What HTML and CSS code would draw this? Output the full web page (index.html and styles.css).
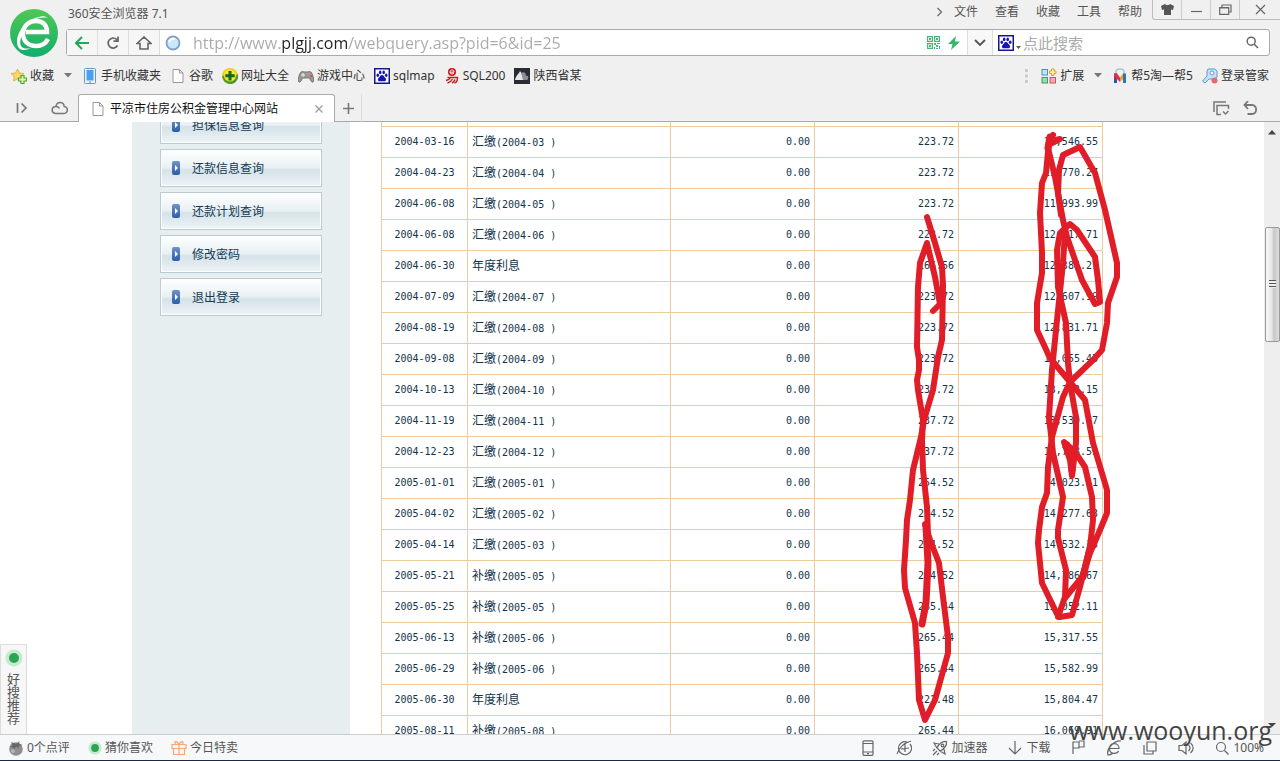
FILE: index.html
```html
<!DOCTYPE html>
<html lang="zh-CN">
<head>
<meta charset="utf-8">
<title>平凉市住房公积金管理中心网站</title>
<link rel="stylesheet" href="styles.css">
</head>
<body>
<svg class="defs" width="0" height="0" aria-hidden="true">
  <symbol id="paw" viewBox="0 0 16 16"><rect x=".75" y=".75" width="14.500" height="14.500" fill="#fff" stroke="#16168c" stroke-width="1.500"/><g fill="#1414b4"><ellipse cx="3.800" cy="7.200" rx="1.300" ry="1.700"/><ellipse cx="6.200" cy="4.400" rx="1.300" ry="1.800"/><ellipse cx="9.700" cy="4.400" rx="1.300" ry="1.800"/><ellipse cx="12.200" cy="7.200" rx="1.300" ry="1.700"/><path d="M8 7c1.700 0 2 1.700 3.200 2.800 1.600 1.500.8 3.700-1.200 3.500-1.400-.2-2.600-.2-4 0-2 .2-2.800-2-1.200-3.500C6 8.700 6.300 7 8 7z"/></g></symbol>
  <symbol id="page" viewBox="0 0 16 16"><path d="M3 1.500h6.500L13 5v9.500H3zM9.500 1.500V5H13" fill="#fff" stroke="#999"/></symbol>
  <symbol id="caret" viewBox="0 0 8 5"><path d="M0 0h8L4 4.500z" fill="#777"/></symbol>
  <symbol id="dot" viewBox="0 0 18 18"><circle cx="9" cy="9" r="8.500" fill="#c4ead0"/><circle cx="9" cy="9" r="5" fill="#2ca552"/></symbol>
</svg>
<header class="chrome">
  <div class="top">
    <svg class="logo" viewBox="0 0 48 48" aria-label="360"><defs><linearGradient id="lg" x1="0" y1="0" x2="0" y2="1"><stop offset="0" stop-color="#50c853"/><stop offset="1" stop-color="#12ad70"/></linearGradient></defs><circle cx="24" cy="24" r="24" fill="url(#lg)"/><path d="M16 23h21c0-7-4-11-11-11-8 0-13 6-13 12 0 8 5 13 13 13 6 0 10-3 12-7" fill="none" stroke="#fff" stroke-width="4.500"/><path d="M38 9c-3-2-6-2-9-1C17 10 7 22 7 33c0 4 2 8 6 8 3 0 6-1 8-2-4 1-8 1-10-2-2-4 0-11 4-17C20 12 29 7 38 9z" fill="#fff"/></svg>
    <div class="topmain">
      <div class="titlebar">
        <span class="title">360安全浏览器 7.1</span>
        <nav class="menu">
          <svg width="8" height="10" viewBox="0 0 8 10"><path d="M1.500 1l4 4-4 4" class="ln"/></svg>
          <button>文件</button><button>查看</button><button>收藏</button><button>工具</button><button>帮助</button>
        </nav>
        <div class="winbtns">
          <button aria-label="皮肤"><svg width="13" height="11" viewBox="0 0 13 11"><path d="M4 0c1 1.500 4 1.500 5 0l4 2-1 4-2-.5V11H3V5.500L1 6 0 2z" fill="#555"/></svg></button>
          <button aria-label="最小化"><svg width="13" height="11" viewBox="0 0 13 11"><path d="M1 7.500h11" class="ln"/></svg></button>
          <button aria-label="还原"><svg width="13" height="11" viewBox="0 0 13 11"><path d="M.7 3.500h9v6.800h-9zM.7 4h9M3 3V1h9v7H10" class="ln"/></svg></button>
          <button aria-label="关闭"><svg width="11" height="11" viewBox="0 0 11 11"><path d="M1 1l9 9M10 1l-9 9" class="ln"/></svg></button>
        </div>
      </div>
      <div class="address">
        <button class="nav" aria-label="后退"><svg width="16" height="14" viewBox="0 0 16 14"><path d="M8 1L2 7l6 6M2 7h13" fill="none" stroke="#21a957" stroke-width="2"/></svg></button>
        <button class="nav" aria-label="刷新"><svg width="14" height="14" viewBox="0 0 14 14"><path d="M11.500 9.500a5 5 0 1 1-1-6.200L12 4.800M12 .5v4.700H7.500" fill="none" stroke="#666" stroke-width="1.700"/></svg></button>
        <button class="nav" aria-label="主页"><svg width="16" height="14" viewBox="0 0 16 14"><path d="M1 7.500L8 1l7 6.500h-3V13H4V7.500z" fill="none" stroke="#666" stroke-width="1.600"/></svg></button>
        <svg class="site" width="16" height="16" viewBox="0 0 16 16"><circle cx="8" cy="8" r="6.500" fill="#c9e8fb" stroke="#7f9fc4" stroke-width="1.800"/><path d="M4 7c1-3 4-4 6-3" stroke="#fff" stroke-width="2" fill="none"/></svg>
        <input class="url" type="text" aria-label="地址" value="http://www.plgjj.com/webquery.asp?pid=6&amp;id=25">
        <svg width="13" height="13" viewBox="0 0 13 13"><path d="M.6.600h4.800v4.800H.6zM7.600.600h4.800v4.800H7.600zM.6 7.600h4.800v4.800H.6z" fill="none" stroke="#45b878" stroke-width="1.200"/><path d="M2 2h2v2H2zM9 2h2v2H9zM2 9h2v2H2zM7 7h2v2H7zM10 7h3v1h-3zM9 9h2v2H9zM12 10h1v3h-1zM7 11h1v2H7zM9 12h2v1H9z" fill="#45b878"/></svg>
        <svg class="bolt" width="12" height="14" viewBox="0 0 12 14"><path d="M8 0L0 8h4.500L3 14l9-8.500H7z" fill="#35b768"/></svg>
        <button class="drop" aria-label="展开"><svg width="12" height="8" viewBox="0 0 12 8"><path d="M1 1l5 5 5-5" fill="none" stroke="#555" stroke-width="1.900"/></svg></button>
        <svg class="engine" width="16" height="16"><use href="#paw"/></svg>
        <svg class="mini" width="5" height="3" viewBox="0 0 8 5"><path d="M0 0h8L4 5z" fill="#555"/></svg>
        <input class="search" type="text" aria-label="搜索" placeholder="点此搜索">
        <button class="go" aria-label="搜索"><svg width="13" height="13" viewBox="0 0 13 13"><circle cx="5.200" cy="5.200" r="4" fill="none" stroke="#666" stroke-width="1.500"/><path d="M8 8l4 4" stroke="#666" stroke-width="1.600"/></svg></button>
      </div>
    </div>
  </div>
  <nav class="marks">
    <a href="#"><svg width="16" height="16" viewBox="0 0 16 16"><path d="M6.500 1l2 4 4.500.5-3.300 3 .9 4.500-4.100-2.200L2.500 13l.8-4.500L0 5.500 4.500 5z" fill="#ffd667" stroke="#d8a63a" stroke-width=".8"/><path d="M10 7.500h3V10h2.500v3H13v2.500h-3V13H7.500v-3H10z" fill="#dff7bd" stroke="#4ea52c" stroke-width="1.200"/></svg>收藏</a>
    <svg class="caret" width="8" height="5"><use href="#caret"/></svg>
    <a href="#"><svg width="16" height="16" viewBox="0 0 16 16"><rect x="2.500" y=".5" width="11" height="15" rx="1" fill="#eaf2fa" stroke="#7893ad"/><rect x="4.500" y="2" width="7" height="10.500" fill="#4aa0ee"/><path d="M7 14h2" stroke="#789"/></svg>手机收藏夹</a>
    <a href="#"><svg width="16" height="16"><use href="#page"/></svg>谷歌</a>
    <a href="#"><svg width="16" height="16" viewBox="0 0 16 16"><circle cx="8" cy="8" r="8" fill="#f0cf1c"/><path d="M0 9C4 4 10 11 16 6A8 8 0 0 1 2 13z" fill="#4d9a2c"/><circle cx="8" cy="7.500" r="6" fill="#f6e63a"/><path d="M6.500 3h3v3.200h3.200v3H9.500v3.200h-3V9.200H3.300v-3h3.200z" fill="#13691f"/></svg>网址大全</a>
    <a href="#"><svg width="16" height="16" viewBox="0 0 16 16"><path d="M3 4c2-1 3 0 5 0s3-1 5 0c2 2 3 7 2.500 9.500-1 2-3-.5-4-3.500h-7c-1 3-3 5.500-4 3.500C0 11 1 6 3 4z" fill="#9a9997" stroke="#565" stroke-width=".7"/><path d="M3 7h4M5 5v4" stroke="#eee"/><circle cx="11" cy="6" r="1.200" fill="#e87d7d"/><circle cx="13" cy="8" r="1" fill="#d44"/></svg>游戏中心</a>
    <a href="#"><svg width="16" height="16"><use href="#paw"/></svg>sqlmap</a>
    <a href="#"><svg width="16" height="16" viewBox="0 0 16 16"><circle cx="8" cy="4" r="4" fill="#c91820"/><path d="M6 4.200h4C10 1 6 1.500 6 4.200c0 2 3 2.300 4 1" fill="none" stroke="#fff"/><path d="M3.500 9.500h10c0 3-.8 5-3 5.500M7 9c-1 2-3 3-5 3.500M8.500 11c-1 2-3 3.500-5 4M11 11.500c-.6 2-2 3-3 3.500" fill="none" stroke="#c91820" stroke-width="1.400"/></svg>SQL200</a>
    <a href="#"><svg width="16" height="16" viewBox="0 0 16 16"><path d="M0 0h16v16H0z" fill="#292b35"/><path d="M1 12C2 7 5 6 6 3l3 4 1 5z" fill="#e6e6e8"/><path d="M7 5c3-2 5 0 5 3 3-1 3 3 1 4H9" fill="#8b8e96"/></svg>陕西省某</a>
    <svg class="grip" width="3" height="14" viewBox="0 0 3 14"><path d="M0 0h3v3H0zM0 5.500h3v3H0zM0 11h3v3H0z" fill="#ccc"/></svg>
    <a href="#"><svg width="16" height="16" viewBox="0 0 16 16"><rect x="1" y="1.500" width="5.500" height="5.500" fill="#bfe5fb" stroke="#4c90bb"/><rect x="1" y="9.500" width="5.500" height="5.500" fill="#96deb1" stroke="#3b9f63"/><rect x="9" y="9.500" width="5.500" height="5.500" fill="#f6a9ab" stroke="#c95b60"/><path d="M10.500 1h2.500v2h2v2.500h-2v2h-2.500v-2h-2V3h2z" fill="#fff0b0" stroke="#dda02a"/></svg>扩展</a>
    <svg class="caret" width="8" height="5"><use href="#caret"/></svg>
    <a href="#"><svg width="16" height="16" viewBox="0 0 16 16"><path d="M4 6V4c0-4 8-4 8 0v2" fill="none" stroke="#a9c7cf" stroke-width="1.600"/><path d="M2 5.500h3V15H2z" fill="#7a3c91"/><path d="M2 5.500h3l3 4v4.500L2 8z" fill="#df3045"/><path d="M11 5.500L8 9.500V14l4-4z" fill="#f0a022"/><path d="M11 5.500h3V15h-3z" fill="#2778bb"/><path d="M2 12h3v3H2z" fill="#2b58a5"/></svg>帮5淘—帮5</a>
    <a href="#"><svg width="16" height="16" viewBox="0 0 16 16"><path d="M6 1h7l2 2v6l-3 2H7l-4 4-2.500-2L5 8V3z" fill="#c5e2f8" stroke="#639cd0"/><circle cx="10" cy="5" r="2" fill="#fff" stroke="#639cd0"/><circle cx="12.500" cy="12.500" r="3" fill="#e7686f"/></svg>登录管家</a>
  </nav>
  <div class="tabs">
    <button aria-label="侧栏"><svg width="12" height="12" viewBox="0 0 12 12"><path d="M1.500 1v10M5.500 1.500L10 6l-4.500 4.500" fill="none" stroke="#777" stroke-width="1.700"/></svg></button>
    <button class="cloud" aria-label="云"><svg width="17" height="14" viewBox="0 0 17 14"><path d="M4.500 12.500h8a3.500 3.500 0 0 0 .7-7C12.500 0 5.500.5 5 5.500 0 5.500 0 12 4.500 12.500zM5 5.500c2 0 3 1 3.500 2" fill="none" stroke="#777" stroke-width="1.500"/></svg></button>
    <div class="tab"><svg width="16" height="16"><use href="#page"/></svg><span>平凉市住房公积金管理中心网站</span><button aria-label="关闭标签"><svg width="8" height="8" viewBox="0 0 8 8"><path d="M.5.500l7 7M7.500.500l-7 7" stroke="#999" stroke-width="1.200"/></svg></button></div>
    <button class="plus" aria-label="新标签"><svg width="11" height="11" viewBox="0 0 11 11"><path d="M5.500 0v11M0 5.500h11" stroke="#777" stroke-width="1.600"/></svg></button>
    <button class="right" aria-label="标签列表"><svg width="17" height="15" viewBox="0 0 17 15"><path d="M1 11V1h12M8 13.500H4v-9h11.500V8M10 10.500l2.500 2.500 3-3" fill="none" stroke="#777" stroke-width="1.500"/></svg></button>
    <button class="undo" aria-label="恢复"><svg width="15" height="14" viewBox="0 0 15 14"><path d="M5 0L1.500 4 5 8M2 4h7c5.500 0 5.500 9 0 9H4.500" fill="none" stroke="#777" stroke-width="1.800"/></svg></button>
  </div>
</header>

<div class="viewport">
  <div class="scroller">
    <div class="page">
      <aside class="side">
        <a href="#">担保信息查询</a>
        <a href="#">还款信息查询</a>
        <a href="#">还款计划查询</a>
        <a href="#">修改密码</a>
        <a href="#">退出登录</a>
      </aside>
      <main class="main">
        <table class="ledger">
          <colgroup><col class="c-date"><col class="c-kind"><col class="c-num"><col class="c-num"><col class="c-num"></colgroup>
          <tbody>
          <tr class="cut"><td></td><td></td><td></td><td></td><td></td></tr>
          <tr><td>2004-03-16</td><td><b>汇缴</b>(2004-03 )</td><td>0.00</td><td>223.72</td><td>11,546.55</td></tr>
          <tr><td>2004-04-23</td><td><b>汇缴</b>(2004-04 )</td><td>0.00</td><td>223.72</td><td>11,770.27</td></tr>
          <tr><td>2004-06-08</td><td><b>汇缴</b>(2004-05 )</td><td>0.00</td><td>223.72</td><td>11,993.99</td></tr>
          <tr><td>2004-06-08</td><td><b>汇缴</b>(2004-06 )</td><td>0.00</td><td>223.72</td><td>12,217.71</td></tr>
          <tr><td>2004-06-30</td><td><b>年度利息</b></td><td>0.00</td><td>166.56</td><td>12,384.27</td></tr>
          <tr><td>2004-07-09</td><td><b>汇缴</b>(2004-07 )</td><td>0.00</td><td>223.72</td><td>12,607.99</td></tr>
          <tr><td>2004-08-19</td><td><b>汇缴</b>(2004-08 )</td><td>0.00</td><td>223.72</td><td>12,831.71</td></tr>
          <tr><td>2004-09-08</td><td><b>汇缴</b>(2004-09 )</td><td>0.00</td><td>223.72</td><td>13,055.43</td></tr>
          <tr><td>2004-10-13</td><td><b>汇缴</b>(2004-10 )</td><td>0.00</td><td>237.72</td><td>13,293.15</td></tr>
          <tr><td>2004-11-19</td><td><b>汇缴</b>(2004-11 )</td><td>0.00</td><td>237.72</td><td>13,530.87</td></tr>
          <tr><td>2004-12-23</td><td><b>汇缴</b>(2004-12 )</td><td>0.00</td><td>237.72</td><td>13,768.59</td></tr>
          <tr><td>2005-01-01</td><td><b>汇缴</b>(2005-01 )</td><td>0.00</td><td>254.52</td><td>14,023.11</td></tr>
          <tr><td>2005-04-02</td><td><b>汇缴</b>(2005-02 )</td><td>0.00</td><td>254.52</td><td>14,277.63</td></tr>
          <tr><td>2005-04-14</td><td><b>汇缴</b>(2005-03 )</td><td>0.00</td><td>254.52</td><td>14,532.15</td></tr>
          <tr><td>2005-05-21</td><td><b>补缴</b>(2005-05 )</td><td>0.00</td><td>254.52</td><td>14,786.67</td></tr>
          <tr><td>2005-05-25</td><td><b>补缴</b>(2005-05 )</td><td>0.00</td><td>265.44</td><td>15,052.11</td></tr>
          <tr><td>2005-06-13</td><td><b>补缴</b>(2005-06 )</td><td>0.00</td><td>265.44</td><td>15,317.55</td></tr>
          <tr><td>2005-06-29</td><td><b>补缴</b>(2005-06 )</td><td>0.00</td><td>265.44</td><td>15,582.99</td></tr>
          <tr><td>2005-06-30</td><td><b>年度利息</b></td><td>0.00</td><td>221.48</td><td>15,804.47</td></tr>
          <tr><td>2005-08-11</td><td><b>补缴</b>(2005-08 )</td><td>0.00</td><td>265.44</td><td>16,069.91</td></tr>
          </tbody>
        </table>
      </main>
      <svg class="ink" viewBox="900 122 230 612" aria-hidden="true">
        <path d="M927 217L935 243 942 267 943 285 942 340 938 357 933 390 924 420 921 437 913 470 910 500 907 520 906 540 904 570 905 588 915 623 917 653 919 700 925 720 935 700 948 653 948 637 943 597 939 563 930 540 925 524"/>
        <path d="M933 311L940 304 935 277 927 243 920 263 918 287 917 347 919 360 919 370 917 380 918 390 923 420 922 440 923 470 927 507 928 535"/>
        <path d="M926 526L928 563 926 603 922 624" stroke-width="7"/>
        <path d="M1053 135L1048 145 1060 139 1049 142 1048 152 1046 173 1042 183 1040 213 1042 253 1042 273 1037 303 1037 330 1050 358 1070 382 1085 400 1093 443 1107 490 1107 513 1100 530 1090 553 1082 577 1065 598"/>
        <path d="M1048 148L1055 177 1063 220 1067 237 1082 280 1095 304 1100 302 1098 280 1095 257 1077 230 1070 224 1060 233 1057 250 1058 287 1066 323 1068 363 1070 383 1076 417 1076 443 1072 476 1070 460 1064 442 1075 452 1085 467 1092 497 1093 520 1090 547 1080 587 1072 615 1060 617"/>
        <path d="M1061 215L1058 193 1059 170 1063 155 1080 147 1095 173 1105 210 1117 263 1117 277 1108 303 1107 323 1102 350 1093 360 1070 382 1063 397 1052 437 1048 467 1047 493 1042 507 1039 530 1038 543 1042 583 1057 614"/>
        <path d="M1065 232L1063 263 1057 320 1052 370 1049 417 1053 453 1063 497 1058 530 1058 538 1066 570 1065 597 1058 617"/>
        <path d="M1050 137L1048 148M1067 445L1073 456 1072 470M1092 540L1083 577" stroke-width="7"/>
      </svg>
    </div>
  </div>
  <div class="bar" aria-hidden="true">
    <svg width="8" height="5" viewBox="0 0 8 5"><path d="M4 0l4 4.500H0z" fill="#444"/></svg>
    <span class="before"></span>
    <span class="thumb"><i></i></span>
    <span class="after"></span>
    <svg width="8" height="5" viewBox="0 0 8 5"><path d="M0 0h8L4 4z" fill="#444"/></svg>
  </div>
  <button class="float"><svg width="18" height="18"><use href="#dot"/></svg><span>好搜推荐</span></button>
</div>

<footer class="status">
  <button><svg width="16" height="16" viewBox="0 0 16 16"><circle cx="8" cy="9" r="6.800" fill="#8f8f8f"/><path d="M8 4L3 2l1.500 3.500L1 7l4 .3L6 10l2-3.500 3 2-.5-2.500 4-1-4-1L12 1z" fill="#666"/><circle cx="5" cy="11" r="2" fill="#b5b5b5"/></svg>0个点评</button>
  <button><svg width="14" height="14"><use href="#dot"/></svg>猜你喜欢</button>
  <button><svg width="16" height="16" viewBox="0 0 16 16"><path d="M1 4.500h14v4H1zM2.500 8.500h11v6h-11zM8 4.500v10M8 4.500C6 0 2.500 1.500 4.500 4M8 4.500c2-4.500 5.500-3 3.500-.5" fill="none" stroke="#f0a779" stroke-width="1.200"/></svg>今日特卖</button>
  <div class="tools">
    <button aria-label="手机"><svg width="16" height="16" viewBox="0 0 16 16"><rect x="3" y=".8" width="10" height="14.500" rx="1" class="ln"/><path d="M3 3.500h10M3 12h10M7 13.700h2" class="ln"/></svg></button>
    <button aria-label="无痕"><svg width="16" height="16" viewBox="0 0 16 16"><path d="M14 4a6.500 6.500 0 1 1-3-2M1 14C3 8 8 3 15 1M9 4v8M5 9l8-1" class="ln"/></svg></button>
    <button><svg width="16" height="16" viewBox="0 0 16 16"><path d="M14.500 1.500C10 1 7 4 5 8l3 3c4-2 7-5 6.500-9.500zM7 4L2 3l3 5M12 9l1 5-5-3M1 15l4-4M1 11l2-2M5 15l2-2" class="ln"/><circle cx="10.500" cy="5.500" r="1.300" class="ln"/></svg>加速器</button>
    <button><svg width="16" height="16" viewBox="0 0 16 16"><path d="M8 1v13M2 8l6 6 6-6" class="ln"/></svg>下载</button>
    <button aria-label="旗标"><svg width="16" height="16" viewBox="0 0 16 16"><path d="M3 14V2h6v6H3M9 1h5v6H9" class="ln"/></svg></button>
    <button aria-label="兼容模式"><svg width="16" height="16" viewBox="0 0 16 16"><path d="M4 8.500h9C13 2 4 2 3.500 8.500c0 6 7.500 6 9 2.500M15 1C9 0 0 8 2 15c2 0 4-1 5-2" class="ln"/></svg></button>
    <button aria-label="小窗"><svg width="16" height="16" viewBox="0 0 16 16"><path d="M5 2h9v9H5zM2 5v9h9v-3" class="ln"/></svg></button>
    <button aria-label="静音"><svg width="16" height="16" viewBox="0 0 16 16"><path d="M1 5.500h3L8 2v12l-4-3.500H1zM10.500 5c2 2 2 4 0 6M12.500 3c3.500 3 3.500 7 0 10" class="ln"/></svg></button>
    <button><svg width="16" height="16" viewBox="0 0 16 16"><circle cx="7" cy="7" r="4.500" class="ln"/><path d="M10.500 10.500l4 4" class="ln"/></svg>100%</button>
  </div>
</footer>
<div class="watermark">www.wooyun.org</div>
</body>
</html>
```
FILE: styles.css
```css
* { box-sizing: border-box; }
body {
  margin: 0;
  height: 100vh;
  display: flex;
  flex-direction: column;
  overflow: hidden;
  position: relative;
  background: #fff;
  font: 12px/16px "Noto Sans", "Noto Sans CJK SC", sans-serif;
  color: #444;
  border-bottom: 1px solid #1b2a40;
}
button { border: 0; background: none; padding: 0; margin: 0; font: inherit; color: inherit; display: flex; align-items: center; justify-content: center; }
a { color: inherit; text-decoration: none; }
input { border: 0; outline: 0; padding: 0; min-width: 0; background: none; }
svg { flex: none; display: block; }
.defs { position: absolute; }
.ln { fill: none; stroke: #666; stroke-width: 1.2; }

.chrome { flex: none; background: #f0f0f0; }
.top { display: flex; }
.logo { width: 48px; height: 48px; margin: 9px 8px 0 10px; }
.topmain { flex: 1; min-width: 0; }
.titlebar { display: flex; height: 29px; align-items: flex-start; }
.title { margin: 6px auto 0 2px; color: #555; }
.menu { display: flex; align-items: center; gap: 17px; margin: 4px 10px 0 0; color: #555; }
.menu svg { margin-right: -7px; }
.winbtns { display: flex; height: 20px; border: 1px solid #bbb; border-width: 0 0 1px 1px; border-radius: 0 0 0 3px; }
.winbtns button { width: 29px; border-right: 1px solid #ccc; }
.winbtns button:last-child { width: 40px; border: 0; }
.address { display: flex; align-items: center; height: 27px; margin-right: 10px; border: 1px solid #aaa; border-radius: 3px; background: #fff; }
.nav { width: 31px; height: 100%; background: #f6f6f6; border-right: 1px solid #ddd; }
.site { margin: 0 12px 0 5px; }
.url {
  flex: 1;
  font: 16px/24px "Open Sans", "Noto Sans CJK SC", sans-serif;
  color: transparent;
  caret-color: #222;
  background: linear-gradient(90deg, #aaa 87px, #222 87px, #222 155px, #aaa 155px);
  background-clip: text;
  -webkit-background-clip: text;
}
.bolt { margin: 0 7px 0 8px; }
.drop { width: 26px; height: 100%; background: #f8f8f8; border: 1px solid #ddd; border-width: 0 1px; }
.engine { margin-left: 5px; }
.mini { margin: 10px 2px 0; }
.search { width: 223px; font: 15px/24px "Noto Sans CJK SC", sans-serif; }
.search::placeholder { color: #aaa; opacity: 1; }
.go { margin: 0 10px 0 auto; }

.marks { display: flex; align-items: center; gap: 9px; height: 37px; padding: 0 11px; color: #333; }
.marks a { display: flex; align-items: center; gap: 3px; white-space: nowrap; }
.caret { margin: 0 1px; }
.grip { margin-left: auto; margin-right: 4px; }

.tabs { display: flex; align-items: stretch; height: 28px; padding-left: 3px; box-shadow: inset 0 -1px #aaa; }
.tabs > button { width: 38px; }
.tabs > .cloud { width: 37px; }
.tabs > .cloud::before { content: ""; width: 1px; height: 16px; margin-right: 10px; background: #d4d4d4; }
.tabs > .cloud svg { margin-right: 10px; }
.tab { display: flex; align-items: center; gap: 4px; width: 257px; padding: 0 11px; background: #fff; border: 1px solid #aaa; border-bottom: 0; border-radius: 3px 3px 0 0; color: #111; }
.tab span { flex: 1; }
.tabs > .plus { width: 27px; border-right: 1px solid #ddd; }
.tabs > .right { width: 29px; margin-left: auto; }
.tabs > .undo { width: 29px; margin-right: 15px; }

.viewport { flex: 1; min-height: 0; display: flex; position: relative; }
.scroller { flex: 1; overflow: hidden; }
.page { width: 1000px; margin: 0 auto; min-height: 100%; display: flex; position: relative; }
.side { width: 218px; background: #e6eef0; padding: 0 28px; display: flex; flex-direction: column; gap: 5px; }
.side a {
  flex: none;
  height: 38px;
  padding-left: 31px;
  display: flex;
  align-items: center;
  position: relative;
  border: 1px solid #b9cbd3;
  box-shadow: inset 0 0 0 1px #fff;
  background: linear-gradient(#fff, #e8f0f3 50%, #d5e2e8 55%, #edf4f6);
  color: #123a55;
  font-family: "Noto Sans CJK SC", sans-serif;
}
.side a:first-child { margin-top: -16px; }
.side a::before { content: ""; position: absolute; left: 11px; top: 11px; width: 8px; height: 14px; border-radius: 2px; background: linear-gradient(#6e93c8, #2c5da8); }
.side a::after { content: ""; position: absolute; left: 14px; top: 15px; border: solid transparent; border-width: 3px 0 3px 3px; border-left-color: #fff; }
.main { flex: 1; padding-left: 31px; }
.ledger { width: 722px; table-layout: fixed; border-collapse: collapse; font: 10px/16px "DejaVu Sans Mono", "Noto Sans CJK SC", monospace; color: #12344a; }
.ledger td { height: 31px; padding: 0 4px; border: 1px solid #eccb9e; text-align: right; }
.ledger td:nth-child(1) { text-align: center; }
.ledger td:nth-child(2) { text-align: left; white-space: pre; }
.ledger b { font: 12px/16px "Noto Sans CJK SC", sans-serif; }
.ledger .cut td { height: 4px; border-top: 0; }
.c-date { width: 86px; }
.c-kind { width: 203px; }
.ink { position: absolute; left: 768px; top: 0; width: 230px; height: 612px; overflow: visible; fill: none; stroke: #e11d28; stroke-width: 6; stroke-linecap: round; stroke-linejoin: round; }

.bar { width: 16px; background: #eee; display: flex; flex-direction: column; align-items: center; padding: 8px 0 6px; }
.before { flex: 92; }
.thumb { flex: 113; width: 15px; border: 1px solid #999; border-radius: 2px; background: linear-gradient(90deg, #f8f8f8, #e6e6e6 45%, #c8c8c8 60%, #ddd); display: flex; align-items: center; justify-content: center; }
.thumb i { width: 7px; height: 8px; background: repeating-linear-gradient(#555 0 1px, #eee 1px 3px); }
.after { flex: 382; }
.float { position: absolute; left: 0; bottom: 0; width: 27px; height: 90px; flex-direction: column; justify-content: flex-start; gap: 6px; padding-top: 4px; background: #f7f7f7; border: 1px solid #ddd; border-bottom: 0; }
.float span { width: 13px; font-size: 13px; line-height: 13px; color: #555; }

.status { flex: none; display: flex; align-items: center; gap: 18px; height: 26px; padding: 0 16px 0 8px; background: #f7f8f9; border-top: 1px solid #ccc; color: #555; }
.status button { gap: 3px; white-space: nowrap; }
.tools { display: flex; gap: 20px; margin-left: auto; }
.watermark { position: absolute; right: 8px; bottom: 14px; font: 25px/32px "Open Sans", sans-serif; color: #444; pointer-events: none; }
```
